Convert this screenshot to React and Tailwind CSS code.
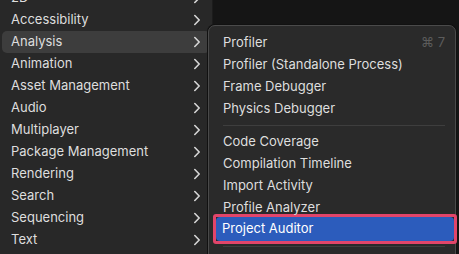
const mainItems = [
  '2D',
  'Accessibility',
  'Analysis',
  'Animation',
  'Asset Management',
  'Audio',
  'Multiplayer',
  'Package Management',
  'Rendering',
  'Search',
  'Sequencing',
  'Text',
]

function Chevron() {
  return (
    <svg width="8" height="12" viewBox="0 0 8 12" fill="none" stroke="currentColor" strokeWidth="1.6" strokeLinecap="round" strokeLinejoin="round">
      <path d="M1.8 1.5l4.4 4.5-4.4 4.5" />
    </svg>
  )
}

function MenuRow({ label, active }) {
  return (
    <div className={`flex items-center h-[22px] mx-[2px] pl-[9px] pr-[9px] rounded-[5px] ${active ? 'bg-[#3d3d3d]' : ''}`}>
      <span className="flex-1">{label}</span>
      <span className="text-[#d6d6d6]"><Chevron /></span>
    </div>
  )
}

function SubRow({ label, shortcut }) {
  return (
    <div className="flex items-center h-[22px] pl-[14px] pr-[10px]">
      <span className="flex-1">{label}</span>
      {shortcut && <span className="text-[#5c5c5c]">{shortcut}</span>}
    </div>
  )
}

function Separator() {
  return (
    <div className="h-[11px] flex items-center pl-[14px] pr-[10px]">
      <div className="h-px w-full bg-[#3e3e3e]" />
    </div>
  )
}

export default function App() {
  return (
    <div className="w-[459px] h-[254px] overflow-hidden flex bg-[#151515] text-[13px] text-[#dedede]" style={{ fontFamily: 'Inter, "Noto Sans", sans-serif' }}>
      {/* main menu */}
      <div className="w-[213px] shrink-0 h-full bg-[#282828] border-r border-[#1c1c1c]">
        <div className="-mt-[13px]">
          {mainItems.map(item => (
            <MenuRow key={item} label={item} active={item === 'Analysis'} />
          ))}
        </div>
      </div>

      {/* submenu */}
      <div className="relative -ml-[5px] mt-[25px] w-[248px] h-[240px] shrink-0 bg-[#2a2a2a] border border-[#4a4a4a] rounded-t-[7px] pt-[6px] shadow-[0_0_0_1px_#111]">
        <SubRow label="Profiler" shortcut="⌘ 7" />
        <SubRow label="Profiler (Standalone Process)" />
        <SubRow label="Frame Debugger" />
        <SubRow label="Physics Debugger" />
        <Separator />
        <SubRow label="Code Coverage" />
        <SubRow label="Compilation Timeline" />
        <SubRow label="Import Activity" />
        <SubRow label="Profile Analyzer" />
        <div className="-mt-[5px] ml-[4px] -mr-[2px] border-[3px] border-[#e2456a] rounded-[3px]">
          <div className="h-[24px] flex items-center pl-[6px] bg-[#2c5cbc] rounded-[4px] text-white">
            Project Auditor
          </div>
        </div>
        <div className="mt-[2px]">
          <div className="h-px ml-[14px] mr-[10px] bg-[#3e3e3e]" />
        </div>
      </div>
    </div>
  )
}
